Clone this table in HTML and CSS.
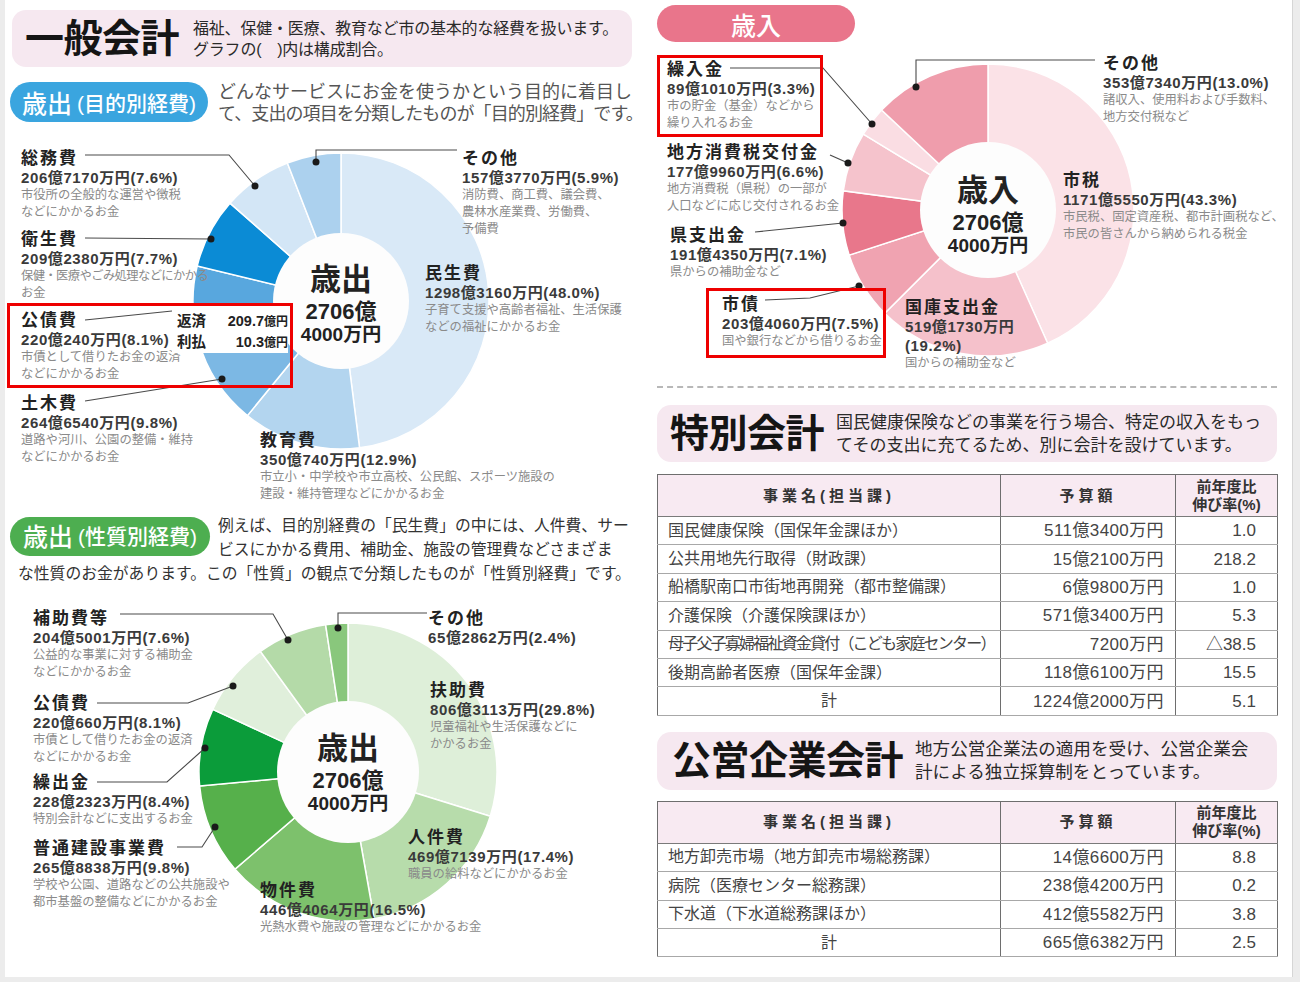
FILE: index.html
```html
<!DOCTYPE html>
<html lang="ja">
<head>
<meta charset="utf-8">
<title>一般会計・特別会計・公営企業会計</title>
<link rel="stylesheet" href="styles.css">
</head>
<body>
<div class="page">
  <div class="col-l">
    <div class="head-box">
      <div class="head-title">一般会計</div>
      <div class="head-desc d16">福祉、保健・医療、教育など市の基本的な経費を扱います。<br>グラフの(　)内は構成割合。</div>
    </div>

    <div class="intro1">
      <div class="pill pill-blue"><span class="pill-big">歳出</span><span class="pill-small">(目的別経費)</span></div>
      <div class="intro-text">どんなサービスにお金を使うかという目的に着目し<br><span class="squeeze">て、支出の項目を分類したものが「目的別経費」です。</span></div>
    </div>

    <div class="chart chart1">
      <svg class="chart-svg" width="645" height="365" viewBox="5 140 645 365">
        <g stroke="#fff" stroke-width="1.5">
          <path fill="#d9e9f7" d="M341 301 L341 153 A148 148 0 0 1 359.55 447.83 Z"/>
          <path fill="#b3d5ef" d="M341 301 L359.55 447.83 A148 148 0 0 1 247.38 415.63 Z"/>
          <path fill="#7cb8e4" d="M341 301 L247.38 415.63 A148 148 0 0 1 198.37 340.5 Z"/>
          <path fill="#58a7de" d="M341 301 L198.37 340.5 A148 148 0 0 1 197.2 266 Z"/>
          <path fill="#0b8bd5" d="M341 301 L197.2 266 A148 148 0 0 1 229.98 203.13 Z"/>
          <path fill="#d3e6f6" d="M341 301 L229.98 203.13 A148 148 0 0 1 287.38 163.05 Z"/>
          <path fill="#acd1ee" d="M341 301 L287.38 163.05 A148 148 0 0 1 341 153 Z"/>
        </g>
        <circle cx="341" cy="301" r="68" fill="#fdfdfd"/>
        <g fill="none" stroke="#4a4a4a" stroke-width="1.1">
          <polyline points="85,155 229,155 255,186"/>
          <polyline points="85,238 211,239"/>
          <polyline points="85,320 172,311"/>
          <polyline points="85,401 222,379"/>
          <polyline points="457,150 316,150 316,162"/>
        </g>
        <g fill="#1a1a1a">
          <circle cx="255" cy="186" r="3.5"/>
          <circle cx="211" cy="239" r="3.5"/>
          <circle cx="222" cy="379" r="3.5"/>
          <circle cx="316" cy="162" r="3.5"/>
        </g>
      </svg>
      <div class="lb c1-somu"><div class="t">総務費</div><div class="a">206億7170万円(7.6%)</div><div class="d">市役所の全般的な運営や徴税<br>などにかかるお金</div></div>
      <div class="lb c1-eisei"><div class="t">衛生費</div><div class="a">209億2380万円(7.7%)</div><div class="d"><span class="dq">保健・医療やごみ処理などにかかる</span><br>お金</div></div>
      <div class="lb c1-kosai"><div class="t">公債費</div><div class="a">220億240万円(8.1%)</div><div class="d">市債として借りたお金の返済<br>などにかかるお金</div></div>
      <div class="lb c1-doboku"><div class="t">土木費</div><div class="a">264億6540万円(9.8%)</div><div class="d">道路や河川、公園の整備・維持<br>などにかかるお金</div></div>
      <div class="lb c1-sonota"><div class="t">その他</div><div class="a">157億3770万円(5.9%)</div><div class="d">消防費、商工費、議会費、<br>農林水産業費、労働費、<br>予備費</div></div>
      <div class="lb c1-minsei"><div class="t">民生費</div><div class="a">1298億3160万円(48.0%)</div><div class="d">子育て支援や高齢者福祉、生活保護<br>などの福祉にかかるお金</div></div>
      <div class="lb c1-kyoiku"><div class="t">教育費</div><div class="a">350億740万円(12.9%)</div><div class="d">市立小・中学校や市立高校、公民館、スポーツ施設の<br>建設・維持管理などにかかるお金</div></div>
      <div class="ctr c1-center"><div class="big">歳出</div><div class="n1">2706億</div><div class="n2">4000万円</div></div>
      <div class="redbox c1-red"></div>
      <div class="paybox c1-pay">
        <span class="pk">返済</span><span class="pv">209.7<small>億円</small></span>
        <span class="pk">利払</span><span class="pv">10.3<small>億円</small></span>
      </div>
    </div>

    <div class="intro2">
      <div class="pill pill-green"><span class="pill-big">歳出</span><span class="pill-small">(性質別経費)</span></div>
      例えば、目的別経費の「民生費」の中には、人件費、サー<br>ビスにかかる費用、補助金、施設の管理費などさまざま<br>な性質のお金があります。この「性質」の観点で分類したものが「性質別経費」です。
    </div>

    <div class="chart chart2">
      <svg class="chart-svg" width="645" height="382" viewBox="5 595 645 382">
        <g stroke="#fff" stroke-width="1.5">
          <path fill="#deefd9" d="M348 772 L348 623 A149 149 0 0 1 490.27 816.26 Z"/>
          <path fill="#b7dcab" d="M348 772 L490.27 816.26 A149 149 0 0 1 374.08 918.7 Z"/>
          <path fill="#7dc16c" d="M348 772 L374.08 918.7 A149 149 0 0 1 235.04 869.16 Z"/>
          <path fill="#56b04b" d="M348 772 L235.04 869.16 A149 149 0 0 1 199.66 786.02 Z"/>
          <path fill="#0b9c3a" d="M348 772 L199.66 786.02 A149 149 0 0 1 212.79 709.41 Z"/>
          <path fill="#e0efdb" d="M348 772 L212.79 709.41 A149 149 0 0 1 260.42 651.46 Z"/>
          <path fill="#b4daa8" d="M348 772 L260.42 651.46 A149 149 0 0 1 325.62 624.69 Z"/>
          <path fill="#89c77c" d="M348 772 L325.62 624.69 A149 149 0 0 1 348 623 Z"/>
        </g>
        <circle cx="348" cy="772" r="71" fill="#fdfdfd"/>
        <g fill="none" stroke="#4a4a4a" stroke-width="1.1">
          <polyline points="120,614 273,614 288,640"/>
          <polyline points="97,703 188,703 233,686"/>
          <polyline points="97,782 167,782 205,748"/>
          <polyline points="177,847 202,847 215,827"/>
          <polyline points="427,613 338,613 338,628"/>
        </g>
        <g fill="#1a1a1a">
          <circle cx="288" cy="640" r="3.5"/>
          <circle cx="233" cy="686" r="3.5"/>
          <circle cx="205" cy="748" r="3.5"/>
          <circle cx="215" cy="827" r="3.5"/>
          <circle cx="338" cy="628" r="3.5"/>
        </g>
      </svg>
      <div class="lb c2-hojo"><div class="t">補助費等</div><div class="a">204億5001万円(7.6%)</div><div class="d">公益的な事業に対する補助金<br>などにかかるお金</div></div>
      <div class="lb c2-kosai"><div class="t">公債費</div><div class="a">220億660万円(8.1%)</div><div class="d">市債として借りたお金の返済<br>などにかかるお金</div></div>
      <div class="lb c2-kuri"><div class="t">繰出金</div><div class="a">228億2323万円(8.4%)</div><div class="d">特別会計などに支出するお金</div></div>
      <div class="lb c2-futsu"><div class="t">普通建設事業費</div><div class="a">265億8838万円(9.8%)</div><div class="d">学校や公園、道路などの公共施設や<br>都市基盤の整備などにかかるお金</div></div>
      <div class="lb c2-sonota"><div class="t">その他</div><div class="a">65億2862万円(2.4%)</div></div>
      <div class="lb c2-fujo"><div class="t">扶助費</div><div class="a">806億3113万円(29.8%)</div><div class="d">児童福祉や生活保護などに<br>かかるお金</div></div>
      <div class="lb c2-jinken"><div class="t">人件費</div><div class="a">469億7139万円(17.4%)</div><div class="d">職員の給料などにかかるお金</div></div>
      <div class="lb c2-bukken"><div class="t">物件費</div><div class="a">446億4064万円(16.5%)</div><div class="d">光熱水費や施設の管理などにかかるお金</div></div>
      <div class="ctr c2-center"><div class="big">歳出</div><div class="n1">2706億</div><div class="n2">4000万円</div></div>
    </div>
  </div>

  <div class="col-r">
    <div class="pill pill-pink"><span class="pill-big">歳入</span></div>

    <div class="chart chart3">
      <svg class="chart-svg" width="642" height="330" viewBox="650 48 642 330">
        <g stroke="#fff" stroke-width="1.5">
          <path fill="#fbe2e7" d="M988 210 L988 64 A146 146 0 0 1 1047.66 343.25 Z"/>
          <path fill="#f5c1cb" d="M988 210 L1047.66 343.25 A146 146 0 0 1 884.76 313.24 Z"/>
          <path fill="#f0a3b1" d="M988 210 L884.76 313.24 A146 146 0 0 1 849.15 255.12 Z"/>
          <path fill="#e8778b" d="M988 210 L849.15 255.12 A146 146 0 0 1 843.27 190.79 Z"/>
          <path fill="#f5c3cc" d="M988 210 L843.27 190.79 A146 146 0 0 1 863.28 134.09 Z"/>
          <path fill="#fadde3" d="M988 210 L863.28 134.09 A146 146 0 0 1 881.57 110.06 Z"/>
          <path fill="#ef9dac" d="M988 210 L881.57 110.06 A146 146 0 0 1 988 64 Z"/>
        </g>
        <circle cx="988" cy="210" r="68" fill="#fdfdfd"/>
        <g fill="none" stroke="#4a4a4a" stroke-width="1.1">
          <polyline points="730,68 823,68 872,124"/>
          <polyline points="830,155 848,163"/>
          <polyline points="755,232 843,223"/>
          <polyline points="765,300 810,298 859,286"/>
          <polyline points="1095,60 916,60 916,87"/>
        </g>
        <g fill="#1a1a1a">
          <circle cx="872" cy="124" r="3.5"/>
          <circle cx="848" cy="163" r="3.5"/>
          <circle cx="843" cy="223" r="3.5"/>
          <circle cx="859" cy="286" r="3.5"/>
          <circle cx="916" cy="87" r="3.5"/>
        </g>
      </svg>
      <div class="lb c3-kuri"><div class="t">繰入金</div><div class="a">89億1010万円(3.3%)</div><div class="d">市の貯金（基金）などから<br>繰り入れるお金</div></div>
      <div class="lb c3-chiho"><div class="t">地方消費税交付金</div><div class="a">177億9960万円(6.6%)</div><div class="d">地方消費税（県税）の一部が<br>人口などに応じ交付されるお金</div></div>
      <div class="lb c3-ken"><div class="t">県支出金</div><div class="a">191億4350万円(7.1%)</div><div class="d">県からの補助金など</div></div>
      <div class="lb c3-sisai"><div class="t">市債</div><div class="a">203億4060万円(7.5%)</div><div class="d">国や銀行などから借りるお金</div></div>
      <div class="lb c3-kokko"><div class="t">国庫支出金</div><div class="a">519億1730万円<br>(19.2%)</div><div class="d">国からの補助金など</div></div>
      <div class="lb c3-shizei"><div class="t">市税</div><div class="a">1171億5550万円(43.3%)</div><div class="d">市民税、固定資産税、都市計画税など、<br>市民の皆さんから納められる税金</div></div>
      <div class="lb c3-sonota"><div class="t">その他</div><div class="a">353億7340万円(13.0%)</div><div class="d">諸収入、使用料および手数料、<br>地方交付税など</div></div>
      <div class="ctr c3-center"><div class="big">歳入</div><div class="n1">2706億</div><div class="n2">4000万円</div></div>
      <div class="redbox c3-red1"></div>
      <div class="redbox c3-red2"></div>
    </div>

    <div class="dash"></div>

    <div class="head-box head-r head-tokubetsu">
      <div class="head-title">特別会計</div>
      <div class="head-desc d17">国民健康保険などの事業を行う場合、特定の収入をもっ<br>てその支出に充てるため、別に会計を設けています。</div>
    </div>

    <table class="tbl tbl1">
      <colgroup><col class="cw1"><col class="cw2"><col class="cw3"></colgroup>
      <thead>
        <tr><th class="th-name">事業名(担当課)</th><th class="th-amt">予算額</th><th class="th-rate">前年度比<br>伸び率(%)</th></tr>
      </thead>
      <tbody>
        <tr><td class="nm">国民健康保険（国保年金課ほか）</td><td class="amt">511億3400万円</td><td class="rt">1.0</td></tr>
        <tr><td class="nm">公共用地先行取得（財政課）</td><td class="amt">15億2100万円</td><td class="rt">218.2</td></tr>
        <tr><td class="nm">船橋駅南口市街地再開発（都市整備課）</td><td class="amt">6億9800万円</td><td class="rt">1.0</td></tr>
        <tr><td class="nm">介護保険（介護保険課ほか）</td><td class="amt">571億3400万円</td><td class="rt">5.3</td></tr>
        <tr><td class="nm tight">母子父子寡婦福祉資金貸付（こども家庭センター）</td><td class="amt">7200万円</td><td class="rt">△38.5</td></tr>
        <tr><td class="nm">後期高齢者医療（国保年金課）</td><td class="amt">118億6100万円</td><td class="rt">15.5</td></tr>
        <tr><td class="sum">計</td><td class="amt">1224億2000万円</td><td class="rt">5.1</td></tr>
      </tbody>
    </table>

    <div class="head-box head-r head-koei">
      <div class="head-title">公営企業会計</div>
      <div class="head-desc d175">地方公営企業法の適用を受け、公営企業会<br>計による独立採算制をとっています。</div>
    </div>

    <table class="tbl tbl2">
      <colgroup><col class="cw1"><col class="cw2"><col class="cw3"></colgroup>
      <thead>
        <tr><th class="th-name">事業名(担当課)</th><th class="th-amt">予算額</th><th class="th-rate">前年度比<br>伸び率(%)</th></tr>
      </thead>
      <tbody>
        <tr><td class="nm">地方卸売市場（地方卸売市場総務課）</td><td class="amt">14億6600万円</td><td class="rt">8.8</td></tr>
        <tr><td class="nm">病院（医療センター総務課）</td><td class="amt">238億4200万円</td><td class="rt">0.2</td></tr>
        <tr><td class="nm">下水道（下水道総務課ほか）</td><td class="amt">412億5582万円</td><td class="rt">3.8</td></tr>
        <tr><td class="sum">計</td><td class="amt">665億6382万円</td><td class="rt">2.5</td></tr>
      </tbody>
    </table>
  </div>
</div>
</body>
</html>
```

FILE: styles.css
```css
html, body {
  margin: 0;
  padding: 0;
}
body {
  background: #ececec;
  font-family: "Liberation Sans", "Noto Sans CJK JP", sans-serif;
  color: #222;
}
.page {
  width: 1288px;
  height: 977px;
  margin-left: 5px;
  background: #fff;
  display: flex;
  border-right: 1px solid #d6d6d6;
  box-sizing: border-box;
}
.col-l {
  width: 645px;
  padding-top: 10px;
  box-sizing: border-box;
}
.col-r {
  width: 642px;
  padding-top: 5px;
  box-sizing: border-box;
}

/* header boxes */
.head-box {
  display: flex;
  align-items: center;
  margin-left: 7px;
  width: 620px;
  height: 57px;
  padding-left: 13px;
  box-sizing: border-box;
  background: #f6e8f0;
  border-radius: 14px;
}
.head-title {
  font-size: 39px;
  font-weight: 700;
  line-height: 1;
  color: #151515;
  letter-spacing: -0.5px;
  white-space: nowrap;
}
.head-desc {
  margin-left: 14px;
  white-space: nowrap;
  color: #2a2a2a;
}
.d16 { font-size: 16px; line-height: 21px; letter-spacing: -0.2px; }
.d17 { font-size: 17px; line-height: 23px; margin-left: 12px; }
.d175 { font-size: 17.6px; line-height: 23px; margin-left: 12px; }
.head-tokubetsu { margin-top: 17px; }
.head-koei { margin-top: 16px; height: 58px; padding-left: 15px; }

/* pills */
.pill {
  display: flex;
  align-items: center;
  justify-content: center;
  color: #fff;
  white-space: nowrap;
}
.pill-big { font-size: 25px; font-weight: 500; }
.pill-small { font-size: 21px; font-weight: 500; margin-left: 5px; }
.pill-blue {
  width: 198px;
  height: 40px;
  margin-top: 1px;
  border-radius: 20px;
  background: #3aa5df;
  flex: none;
}
.pill-green {
  float: left;
  width: 200px;
  height: 39px;
  margin: 3px 8px 4px -8px;
  border-radius: 20px;
  background: #4dae50;
}
.pill-pink {
  margin-left: 7px;
  width: 198px;
  height: 37px;
  border-radius: 19px;
  background: #e9758b;
}

/* intro texts */
.intro1 {
  display: flex;
  margin-top: 14px;
  height: 59px;
  padding-left: 5px;
}
.intro-text {
  margin-left: 10px;
  font-size: 18px;
  line-height: 22px;
  color: #555;
  white-space: nowrap;
}
.squeeze { letter-spacing: -0.9px; }
.intro2 {
  margin-top: 9px;
  height: 81px;
  padding-left: 13px;
  font-size: 15.8px;
  line-height: 24px;
  color: #333;
  white-space: nowrap;
  box-sizing: border-box;
}

/* charts */
.chart { position: relative; }
.chart-svg { position: absolute; left: 0; top: 0; }
.chart1 { height: 365px; }
.chart2 { height: 382px; }
.chart3 { height: 330px; margin-top: 6px; }

.lb { position: absolute; white-space: nowrap; }
.lb .t {
  font-size: 17px;
  font-weight: 700;
  line-height: 19px;
  letter-spacing: 2px;
  color: #222;
}
.lb .a {
  font-size: 15px;
  font-weight: 700;
  line-height: 19px;
  letter-spacing: 0.6px;
  color: #3a3a3a;
}
.lb .d {
  font-size: 12.3px;
  line-height: 17px;
  color: #8a8a8a;
}
.lb .dq { letter-spacing: -0.6px; }

.c1-somu { left: 16px; top: 9px; }
.c1-eisei { left: 16px; top: 90px; }
.c1-kosai { left: 16px; top: 171px; }
.c1-doboku { left: 16px; top: 254px; }
.c1-sonota { left: 457px; top: 9px; }
.c1-minsei { left: 420px; top: 124px; }
.c1-kyoiku { left: 255px; top: 291px; }

.c2-hojo { left: 28px; top: 14px; }
.c2-kosai { left: 28px; top: 99px; }
.c2-kuri { left: 28px; top: 178px; }
.c2-futsu { left: 28px; top: 244px; }
.c2-sonota { left: 423px; top: 14px; }
.c2-fujo { left: 425px; top: 86px; }
.c2-jinken { left: 403px; top: 233px; }
.c2-bukken { left: 255px; top: 286px; }

.c3-kuri { left: 17px; top: 12px; }
.c3-chiho { left: 17px; top: 95px; }
.c3-ken { left: 20px; top: 178px; }
.c3-sisai { left: 72px; top: 247px; }
.c3-kokko { left: 255px; top: 250px; }
.c3-shizei { left: 413px; top: 123px; }
.c3-sonota { left: 453px; top: 6px; }

.ctr {
  position: absolute;
  width: 150px;
  text-align: center;
  color: #222;
  white-space: nowrap;
}
.ctr .big { font-size: 31px; font-weight: 700; line-height: 40px; }
.ctr .n1 { font-size: 22px; font-weight: 700; line-height: 24px; }
.ctr .n2 { font-size: 19px; font-weight: 700; line-height: 22px; }
.c1-center { left: 261px; top: 120px; }
.c2-center { left: 268px; top: 134px; }
.c3-center { left: 263px; top: 123px; }

.redbox {
  position: absolute;
  border: 3px solid #ee0000;
  box-sizing: border-box;
}
.c1-red { left: 2px; top: 163px; width: 286px; height: 85px; }
.c3-red1 { left: 7px; top: 7px; width: 166px; height: 82px; }
.c3-red2 { left: 56px; top: 240px; width: 180px; height: 70px; }

.paybox {
  position: absolute;
  left: 167px;
  top: 166px;
  width: 116px;
  height: 47px;
  box-sizing: border-box;
  padding: 5px 0 0 5px;
  background: #fff;
  display: grid;
  grid-template-columns: auto 1fr;
  column-gap: 6px;
  font-size: 14.5px;
  font-weight: 700;
  line-height: 20px;
  color: #222;
  white-space: nowrap;
}
.paybox .pv { text-align: right; }
.paybox small { font-size: 12px; }

/* dashed divider */
.dash {
  margin: 8px 0 0 7px;
  width: 620px;
  border-top: 2px dashed #b8b8b8;
}

/* tables */
.tbl {
  margin-left: 7px;
  width: 620px;
  border-collapse: collapse;
  table-layout: fixed;
  font-size: 16px;
  color: #444;
  border: 1.5px solid #6e6e6e;
}
.tbl1 { margin-top: 12px; }
.tbl2 { margin-top: 11px; }
.cw1 { width: 343px; }
.cw2 { width: 175px; }
.cw3 { width: 102px; }
.tbl th {
  height: 41px;
  padding: 0;
  background: #f8eaf2;
  font-size: 15px;
  font-weight: 700;
  line-height: 18px;
  color: #333;
  border: 1px solid #6e6e6e;
  border-bottom: 1.5px solid #7a7a7a;
}
.th-name { letter-spacing: 4px; }
.th-amt { letter-spacing: 4px; }
.tbl td {
  height: 27.4px;
  padding: 0;
  line-height: 1;
  white-space: nowrap;
  border-left: 1px solid #6e6e6e;
  border-right: 1px solid #6e6e6e;
  border-bottom: 1.5px solid #a8a8a8;
}
.tbl td.nm { padding-left: 10px; text-align: left; }
.tbl td.tight { letter-spacing: -1.8px; }
.tbl td.sum { text-align: center; }
.tbl td.amt {
  text-align: right;
  padding-right: 11px;
  font-size: 17px;
  letter-spacing: 0.4px;
}
.tbl td.rt {
  text-align: right;
  padding-right: 21px;
  font-size: 17px;
}
```
